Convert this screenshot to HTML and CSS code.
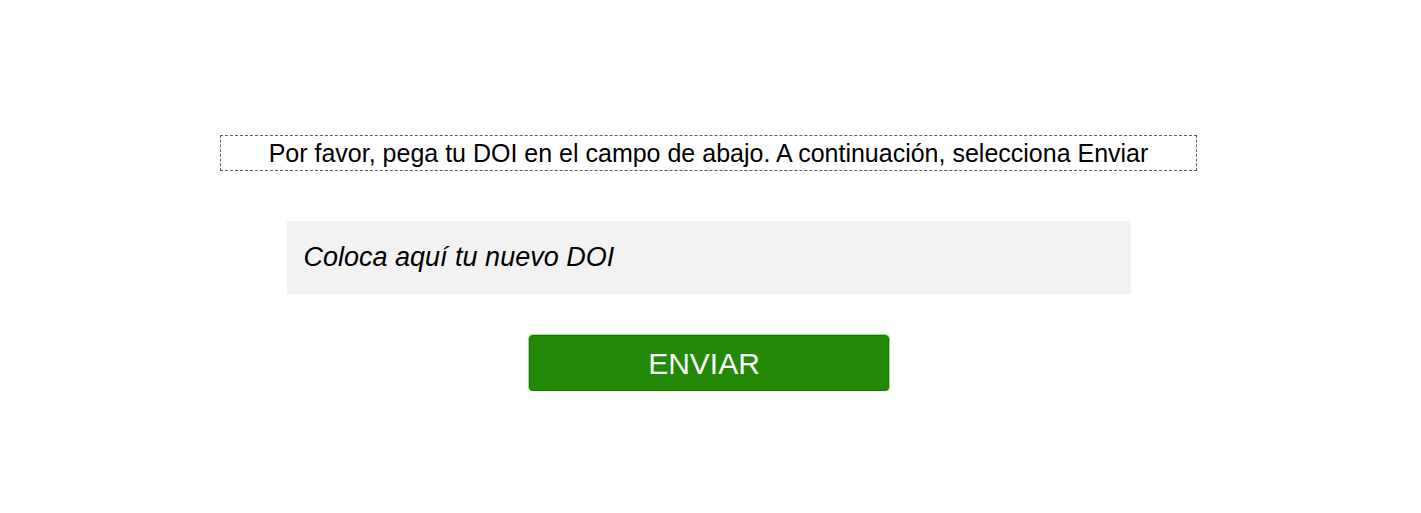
FILE: index.html
```html
<!DOCTYPE html>
<html lang="es">
<head>
<meta charset="utf-8">
<link rel="stylesheet" href="styles.css">
</head>
<body>
<main class="page">
  <div class="notice">Por favor, pega tu DOI en el campo de abajo. A continuación, selecciona Enviar</div>
  <input class="doi-input" type="text" placeholder="Coloca aquí tu nuevo DOI">
  <button class="submit" type="button">ENVIAR</button>
</main>
</body>
</html>
```
FILE: styles.css
```css
html, body {
  margin: 0;
  padding: 0;
  background: #ffffff;
}
.page {
  display: flex;
  flex-direction: column;
  align-items: center;
  padding-top: 135px;
  padding-right: 4px;
  font-family: "Liberation Sans", Arial, sans-serif;
}
.notice {
  box-sizing: border-box;
  width: 977px;
  height: 36px;
  border: 1px dashed #5e5e5e;
  font-size: 25px;
  line-height: 34px;
  text-align: center;
  color: #000;
}
.doi-input {
  box-sizing: border-box;
  margin-top: 50px;
  width: 844px;
  height: 73px;
  border: none;
  outline: none;
  background: #f2f2f2;
  padding: 0 17px;
  font-family: "Liberation Sans", Arial, sans-serif;
  font-size: 27px;
  font-style: italic;
  color: #000;
}
.doi-input::placeholder {
  color: #000;
  opacity: 1;
}
.submit {
  box-sizing: border-box;
  margin-top: 41px;
  width: 360px;
  height: 56px;
  background: #228a07;
  border: 1px solid #1d700a;
  border-radius: 4px;
  color: #ffffff;
  font-family: "Liberation Sans", Arial, sans-serif;
  font-size: 30px;
  padding: 1px 9px 0 0;
  box-shadow: 0 0 0 1px #a8de98, 0 0 3px 1px #dff5d8;
}
```
